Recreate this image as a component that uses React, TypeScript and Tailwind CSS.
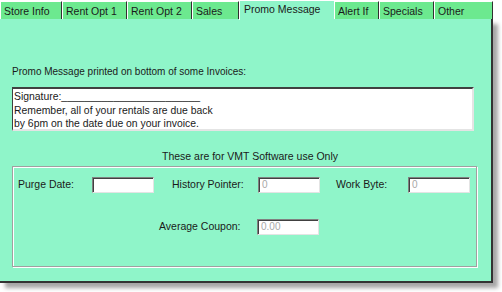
const tabs = [
  { label: "Store Info", w: 62 },
  { label: "Rent Opt 1", w: 65 },
  { label: "Rent Opt 2", w: 65 },
  { label: "Sales", w: 47 },
  { label: "Promo Message", w: 95, active: true },
  { label: "Alert If", w: 45 },
  { label: "Specials", w: 55 },
  { label: "Other", w: 59 },
];

function Field({ value, width = 62 }: { value?: string; width?: number }) {
  return (
    <div
      className="h-[16px] bg-white border-t border-l border-[#808080] border-b-[#e4e4e4] border-r-[#e4e4e4] border-b border-r shadow-[inset_1px_1px_0_#404040] pl-[3px] text-[10px] leading-[14px] text-[#a8a8a8]"
      style={{ width }}
    >
      {value}
    </div>
  );
}

export default function App() {
  return (
    <div className="w-[502px] h-[292px] bg-white font-['Liberation_Sans',Arial,sans-serif] text-[11px] text-[#1a1a1a]">
      <div className="w-[493px] flex flex-col">
        <div className="flex items-end h-[19px]">
          {tabs.map((t) =>
            t.active ? (
              <div
                key={t.label}
                className="h-[20px] -mb-px z-10 bg-[#8ff5c9] border-t border-l border-white px-[4px] pt-[1px] leading-[14px] text-[10.5px] shrink-0"
                style={{ width: t.w }}
              >
                {t.label}
              </div>
            ) : (
              <div
                key={t.label}
                className="h-[18px] bg-[#6ce98f] border-t border-l border-white border-r border-r-[#303030] px-[3px] pt-[2px] leading-[14px] text-[10.5px] shrink-0"
                style={{ width: t.w }}
              >
                {t.label}
              </div>
            )
          )}
        </div>
        <div className="h-[264px] bg-[#8ff5c9] border-r-2 border-b-2 border-[#333] shadow-[5px_5px_4px_rgba(0,0,0,0.35)] flex flex-col px-[12px]">
          <div className="mt-[46px] leading-[14px] text-[10px]">
            Promo Message printed on bottom of some Invoices:
          </div>
          <div className="mt-[8px] w-[462px] h-[44px] bg-white border-t-2 border-l border-[#404040] border-b-2 border-r-2 border-b-[#e4e4e4] border-r-[#e4e4e4] pl-[1px] pt-[1px] text-[10.4px] leading-[13.5px]">
            <div>Signature:________________________</div>
            <div>Remember, all of your rentals are due back</div>
            <div>by 6pm on the date due on your invoice.</div>
          </div>
          <div className="mt-[18px] ml-[150px] leading-[14px] text-[10.5px]">
            These are for VMT Software use Only
          </div>
          <div className="mt-[3px] w-[465px] h-[101px] border border-[#a0a0a0] shadow-[inset_1px_1px_0_#fff,1px_1px_0_#fff] text-[10.5px]">
            <div className="flex items-center mt-[10px] pl-[5px]">
              <span className="w-[74px]">Purge Date:</span>
              <Field />
              <span className="ml-[18px] w-[86px]">History Pointer:</span>
              <Field value="0" />
              <span className="ml-[16px] w-[72px]">Work Byte:</span>
              <Field value="0" />
            </div>
            <div className="flex items-center mt-[26px] pl-[5px]">
              <span className="ml-[141px] w-[98px]">Average Coupon:</span>
              <Field value="0.00" />
            </div>
          </div>
        </div>
      </div>
    </div>
  );
}
